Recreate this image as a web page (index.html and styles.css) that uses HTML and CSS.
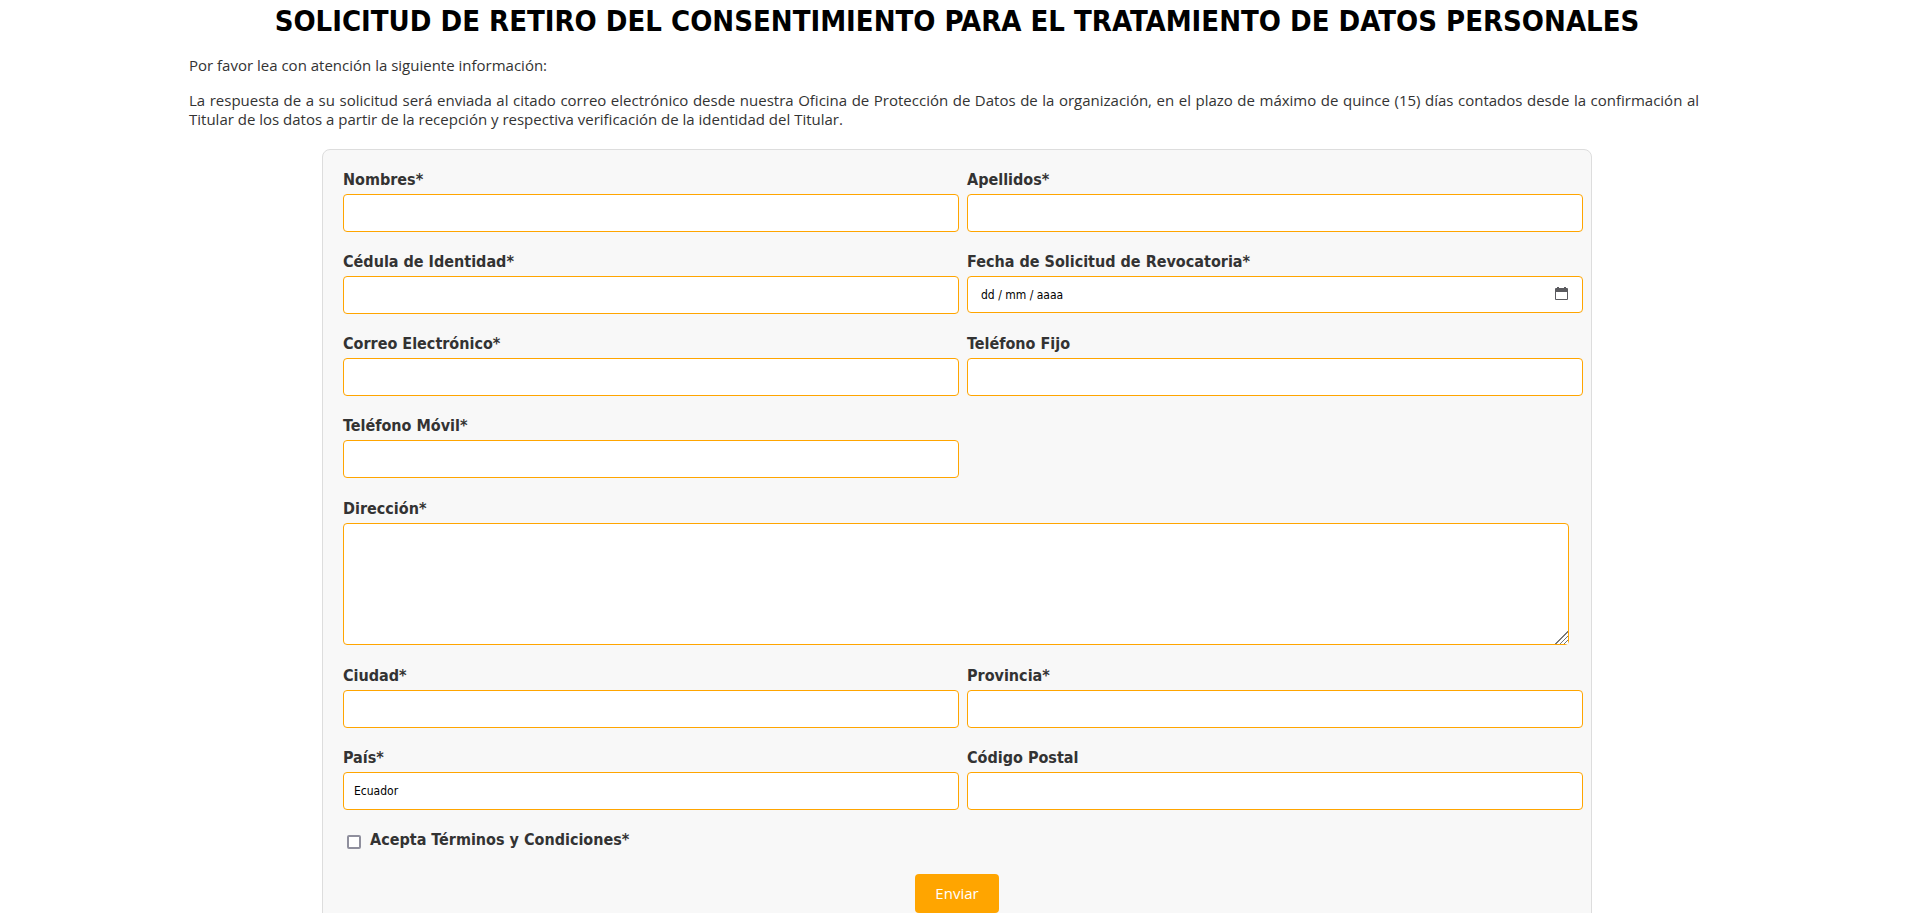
FILE: index.html
```
<!DOCTYPE html>
<html lang="es">
<head>
  <meta charset="UTF-8">
  <meta name="viewport" content="width=device-width, initial-scale=1.0">
  <title>Solicitud de Retiro del Consentimiento</title>
  <link rel="stylesheet" href="styles.css">
</head>
<body>
  <main class="container">
    <h1>SOLICITUD DE RETIRO DEL CONSENTIMIENTO PARA EL TRATAMIENTO DE DATOS PERSONALES</h1>

    <div class="intro">
      <p>Por favor lea con atención la siguiente información:</p>
      <p>La respuesta de a su solicitud será enviada al citado correo electrónico desde nuestra Oficina de Protección de Datos de la organización, en el plazo de máximo de quince (15) días contados desde la confirmación al Titular de los datos a partir de la recepción y respectiva verificación de la identidad del Titular.</p>
    </div>

    <form class="form-container" action="#" method="post">
      <div class="form-group">
        <label for="nombres">Nombres*</label>
        <input type="text" id="nombres" name="nombres" required>
      </div>
      <div class="form-group">
        <label for="apellidos">Apellidos*</label>
        <input type="text" id="apellidos" name="apellidos" required>
      </div>

      <div class="form-group">
        <label for="cedula">Cédula de Identidad*</label>
        <input type="text" id="cedula" name="cedula" required>
      </div>
      <div class="form-group">
        <label for="fecha">Fecha de Solicitud de Revocatoria*</label>
        <div class="date-field">
          <input type="date" id="fecha" name="fecha" required>
          <span class="date-hint" aria-hidden="true">dd / mm / aaaa</span>
          <svg class="date-icon" width="13" height="13" viewBox="0 0 13 13" aria-hidden="true">
            <path fill="#5b5b5f" fill-rule="evenodd" d="M2 0h2v1h5V0h2v1h1a1 1 0 0 1 1 1v10a1 1 0 0 1-1 1H1a1 1 0 0 1-1-1V2a1 1 0 0 1 1-1h1zM1 5v7h11V5z"/>
          </svg>
        </div>
      </div>

      <div class="form-group">
        <label for="correo">Correo Electrónico*</label>
        <input type="email" id="correo" name="correo" required>
      </div>
      <div class="form-group">
        <label for="telefono">Teléfono Fijo</label>
        <input type="tel" id="telefono" name="telefono">
      </div>

      <div class="form-group">
        <label for="movil">Teléfono Móvil*</label>
        <input type="tel" id="movil" name="movil" required>
      </div>

      <div class="form-group full-width">
        <label for="direccion">Dirección*</label>
        <textarea id="direccion" name="direccion" required></textarea>
      </div>

      <div class="form-group">
        <label for="ciudad">Ciudad*</label>
        <input type="text" id="ciudad" name="ciudad" required>
      </div>
      <div class="form-group">
        <label for="provincia">Provincia*</label>
        <input type="text" id="provincia" name="provincia" required>
      </div>

      <div class="form-group">
        <label for="pais">País*</label>
        <input type="text" id="pais" name="pais" value="Ecuador" required>
      </div>
      <div class="form-group">
        <label for="postal">Código Postal</label>
        <input type="text" id="postal" name="postal">
      </div>

      <div class="terms">
        <input type="checkbox" id="terminos" name="terminos" required>
        <label for="terminos">Acepta Términos y Condiciones*</label>
      </div>

      <div class="actions">
        <button type="submit">Enviar</button>
      </div>
    </form>
  </main>
</body>
</html>
```
FILE: styles.css
```
* { box-sizing: border-box; }

body {
  margin: 0;
  padding: 4px 0 0 3px;
  font-family: "DejaVu Sans Condensed", "DejaVu Sans", sans-serif;
  font-size: 16px;
  line-height: 19px;
  color: #333;
  background-color: #fff;
}

.container {
  max-width: 1536px;
  margin: 0 auto;
}

h1 {
  margin: 0 0 18px;
  font-size: 29px;
  line-height: 34px;
  text-align: center;
  color: #000;
}

.intro {
  padding-right: 26px;
  font-family: "Open Sans", sans-serif;
  font-size: 15px;
  text-align: justify;
}

.intro p {
  margin: 0 0 16px;
}

/* Formulario */
.form-container {
  display: grid;
  grid-template-columns: 1fr 1fr;
  gap: 20px 8px;
  max-width: 1270px;
  margin: 20px auto 0;
  padding: 20px 8px 20px 20px;
  background-color: #f8f8f8;
  border: 1px solid #ddd;
  border-radius: 8px;
}

.form-group label {
  display: block;
  margin-bottom: 4px;
  font-weight: bold;
  line-height: 20px;
}

.form-group input,
.form-group textarea {
  display: block;
  width: 100%;
  height: 38px;
  padding: 10px;
  font-family: inherit;
  font-size: 12px;
  color: #000;
  background-color: #fff;
  border: 1px solid orange;
  border-radius: 4px;
}

.full-width {
  grid-column: 1 / -1;
  padding: 1px 14px 1px 0;
}

.form-group textarea {
  height: 122px;
  resize: vertical;
}

.form-group textarea::-webkit-resizer {
  background:
    linear-gradient(135deg, #fff 50%, transparent 50%),
    repeating-linear-gradient(135deg, #777 0 1px, #fff 1px 3px);
}

/* Campo de fecha */
.date-field {
  position: relative;
}

.date-field input {
  height: 37px;
}

.date-field input:invalid::-webkit-datetime-edit {
  opacity: 0;
}

.date-field input::-webkit-calendar-picker-indicator {
  opacity: 0;
}

.date-hint,
.date-icon {
  position: absolute;
  pointer-events: none;
}

.date-hint {
  top: 10px;
  left: 14px;
  font-size: 12px;
  color: #000;
}

.date-icon {
  top: 11px;
  right: 15px;
}

.date-field input:valid + .date-hint {
  display: none;
}

/* Términos y envío */
.terms {
  grid-column: 1 / -1;
  display: flex;
  align-items: center;
  gap: 9px;
}

.terms input {
  appearance: none;
  width: 14px;
  height: 14px;
  margin: 4px 0 0 4px;
  background-color: #fff;
  border: 2px solid #8f8f9d;
  border-radius: 2px;
}

.terms input:checked {
  background-color: orange;
}

.terms label {
  font-weight: bold;
  line-height: 20px;
}

.actions {
  grid-column: 1 / -1;
  padding: 4px 12px 0 0;
  text-align: center;
}

button {
  padding: 10px 20px;
  font-family: "Open Sans", sans-serif;
  font-size: 15px;
  line-height: 19px;
  color: #fff;
  background-color: orange;
  border: none;
  border-radius: 4px;
  cursor: pointer;
}

button:hover {
  background-color: #ff8c00;
}
```
